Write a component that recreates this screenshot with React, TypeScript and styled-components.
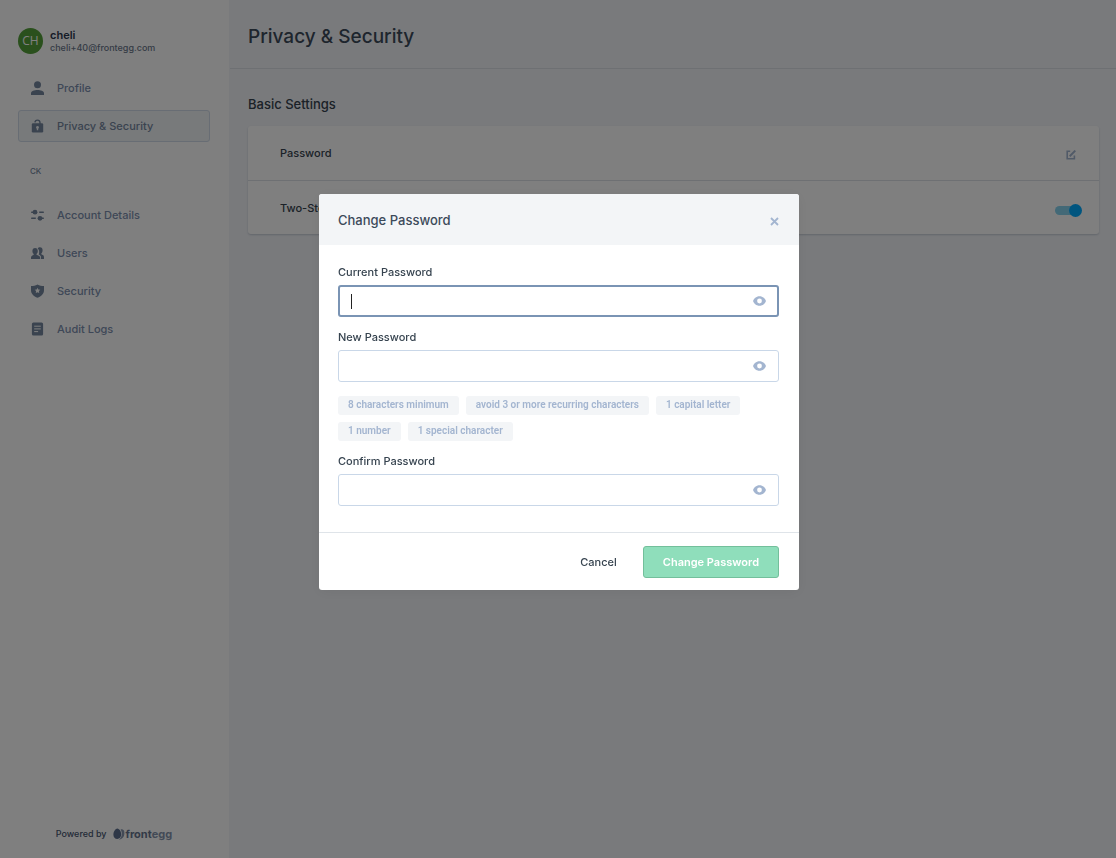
import React, { useState } from "react";
import styled, { createGlobalStyle } from "styled-components";

const GlobalStyle = createGlobalStyle`
  *, *::before, *::after { box-sizing: border-box; }
  body {
    margin: 0;
    background: #f3f5f9;
    color: #36434f;
    font-family: Inter, "Liberation Sans", sans-serif;
    font-size: 11px;
    font-weight: 500;
    line-height: 16px;
  }
  button, input { font: inherit; color: inherit; }
  button { border: 0; padding: 0; background: none; cursor: pointer; }
  h1, h2, h3, p, ul { margin: 0; padding: 0; font-weight: 500; }
  ul { list-style: none; }
`;

/* Portal shell */

const Shell = styled.div`
  display: flex;
  min-height: 100vh;
`;

const Sidebar = styled.aside`
  display: flex;
  flex-direction: column;
  flex: none;
  width: 230px;
  padding: 28px 19px 16px 18px;
  background: #fff;
  border-right: 1px solid #f3f5f9;
`;

const UserCard = styled.div`
  display: flex;
  align-items: center;
  gap: 7px;
  margin-bottom: 18px;
`;

const Avatar = styled.div`
  display: grid;
  place-items: center;
  width: 25px;
  height: 26px;
  border-radius: 50%;
  background: #54a03a;
  color: #fff;
  font-family: "Open Sans", sans-serif;
  font-weight: 400;
  font-size: 12px;
`;

const UserName = styled.p`
  font-weight: 600;
  line-height: 13px;
  color: #2d3850;
`;

const UserEmail = styled.p`
  font-size: 9px;
  font-weight: 500;
  line-height: 12px;
  color: #6b788c;
`;

const NavList = styled.ul`
  display: flex;
  flex-direction: column;
  gap: 6px;
`;

const NavLink = styled.a<{ $active?: boolean }>`
  display: flex;
  align-items: center;
  gap: 13px;
  height: 32px;
  padding: 0 12px;
  border: 1px solid ${(p) => (p.$active ? "#d0dbe8" : "transparent")};
  border-radius: 3px;
  background: ${(p) => (p.$active ? "#f1f4f7" : "transparent")};
  color: ${(p) => (p.$active ? "#75879f" : "#7c8fae")};
  text-decoration: none;

  svg { color: #75879f; }
`;

const NavHeading = styled.h2`
  padding: 21px 12px 20px;
  font-size: 8px;
  color: #75879f;
`;

const PoweredBy = styled.footer`
  display: flex;
  justify-content: center;
  align-items: center;
  gap: 6px;
  margin-top: auto;
  font-size: 9px;
  color: #47566f;
`;

const Brand = styled.span`
  display: flex;
  align-items: center;
  font-size: 11px;
  font-weight: 700;
  color: #66758f;

  svg { margin-right: 1px; }
`;

const BrandTail = styled.span`
  color: #8695ad;
`;

const Main = styled.main`
  flex: 1;
  min-width: 0;
`;

const PageHeader = styled.header`
  display: flex;
  align-items: center;
  height: 69px;
  padding: 6px 18px 0;
  border-bottom: 1px solid #dde1e7;
`;

const PageTitle = styled.h1`
  font-size: 19px;
  line-height: 24px;
  color: #3c4a5a;
`;

const Section = styled.section`
  padding: 26px 17px 26px 18px;
`;

const SectionTitle = styled.h2`
  margin-bottom: 13px;
  font-size: 13px;
  line-height: 18px;
`;

const SettingsCard = styled.div`
  border-radius: 3px;
  background: #fff;
  box-shadow: 0 1px 2px rgba(60, 80, 110, 0.25);
`;

const SettingRow = styled.div`
  display: flex;
  align-items: center;
  justify-content: space-between;
  height: 54px;
  padding: 0 18px 0 32px;

  & + & {
    border-top: 1px solid #dde1e7;
  }
`;

const EditButton = styled.button`
  display: flex;
  margin-right: 5px;
  padding: 3px 0 0;
  color: #a3b5d0;
`;

const Toggle = styled.input`
  appearance: none;
  display: flex;
  align-items: center;
  width: 26px;
  height: 9px;
  margin: 6px 0 0;
  border-radius: 5px;
  background: #86d2ee;
  cursor: pointer;

  &::before {
    content: "";
    width: 13px;
    height: 13px;
    flex: none;
    border-radius: 50%;
    background: #aab6c8;
  }
  &:checked::before {
    margin-left: 14px;
    background: #00aaff;
  }
`;

/* Dialog */

const Overlay = styled.div`
  position: fixed;
  inset: 0;
  display: flex;
  align-items: center;
  justify-content: center;
  padding: 0 0 74px 2px;
  background: rgba(0, 0, 0, 0.5);
`;

const Dialog = styled.form`
  width: 480px;
  max-width: 100%;
  border-radius: 3px;
  overflow: hidden;
  background: #fff;
  box-shadow: 0 2px 14px rgba(0, 0, 0, 0.06);
`;

const DialogHeader = styled.header`
  display: flex;
  align-items: center;
  justify-content: space-between;
  height: 51px;
  padding: 0 20px 0 19px;
  background: #f3f5f7;
`;

const DialogTitle = styled.h2`
  font-size: 13px;
  line-height: 18px;
  color: #3c4a5a;
`;

const CloseButton = styled.button`
  display: flex;
  padding-top: 4px;
  color: #a3b5d0;
`;

const DialogBody = styled.div`
  display: flex;
  flex-direction: column;
  gap: 12px;
  padding: 19px 20px 26px 19px;
`;

const FieldLabel = styled.label`
  display: block;
  margin-bottom: 5px;
`;

const FieldBox = styled.div<{ $focused?: boolean }>`
  position: relative;
  display: flex;
  align-items: center;
  height: 32px;
  padding: 0 ${(p) => (p.$focused ? 11 : 12)}px;
  border: ${(p) => (p.$focused ? "2px solid #7a94b4" : "1px solid #c9d7e8")};
  border-radius: 3px;
`;

const Caret = styled.span`
  position: absolute;
  left: 11px;
  top: 7px;
  width: 1px;
  height: 15px;
  background: #222;
`;

const FieldInput = styled.input`
  flex: 1;
  min-width: 0;
  height: 28px;
  padding: 0;
  border: 0;
  outline: 0;
  background: none;
`;

const RevealButton = styled.button`
  display: flex;
  color: #a3b5d0;
`;

const RuleList = styled.ul`
  display: flex;
  flex-wrap: wrap;
  gap: 7px;
  padding-top: 2px;
`;

const Rule = styled.li`
  height: 19px;
  padding: 0 10px;
  border-radius: 3px;
  background: #f3f5f7;
  color: #a3b5d0;
  font-family: Roboto, sans-serif;
  font-size: 10px;
  font-weight: 600;
  line-height: 18px;
`;

const DialogFooter = styled.footer`
  display: flex;
  justify-content: flex-end;
  align-items: center;
  gap: 6px;
  height: 58px;
  padding: 0 20px;
  border-top: 1px solid #dfe4e9;
`;

const Button = styled.button<{ $primary?: boolean }>`
  height: 32px;
  padding: 0 19px;
  border: 1px solid ${(p) => (p.$primary ? "#73bf9b" : "transparent")};
  border-radius: 3px;
  background: ${(p) => (p.$primary ? "#8fdebb" : "transparent")};
  color: ${(p) => (p.$primary ? "#fff" : "#36434f")};
  font-weight: ${(p) => (p.$primary ? 600 : 500)};
`;

/* Icons */

const NavSvg = ({ children }: { children: React.ReactNode }) => (
  <svg width="13" height="14" viewBox="0 0 13 14" fill="currentColor" aria-hidden="true">
    {children}
  </svg>
);

const ProfileIcon = () => (
  <NavSvg>
    <circle cx="6.5" cy="3.7" r="3.5" />
    <path d="M0 14v-1.9C0 10 3.3 8.9 6.5 8.9S13 10 13 12.1V14z" />
  </NavSvg>
);

const LockIcon = () => (
  <NavSvg>
    <path d="M3.900 3.400C4.200 .4 8.800 .2 9 3.600V5" fill="none" stroke="currentColor" strokeWidth="1.4" />
    <rect x="0.8" y="4.300" width="11.400" height="9.200" rx="1.2" />
    <path d="M6.5 6.900a1.500 1.500 0 0 1 .7 2.800v1.500H5.800V9.700a1.500 1.500 0 0 1 .7-2.800z" fill="#f1f4f7" />
  </NavSvg>
);

const SlidersIcon = () => (
  <NavSvg>
    <path d="M.7 4.200H12.300M.7 10.300H12.300" stroke="currentColor" strokeWidth="1.4" strokeLinecap="round" />
    <rect x="6" y="3" width="2.2" height="2.4" fill="#fff" />
    <rect x="4.8" y="9" width="2.2" height="2.6" fill="#fff" />
    <circle cx="4" cy="4.2" r="2.4" />
    <circle cx="9" cy="10.3" r="2.4" />
  </NavSvg>
);

const UsersIcon = () => (
  <NavSvg>
    <path d="M6.7 2.600C7 1.500 8 1.200 9 1.200c1.700 0 2.600 1.200 2.600 3 0 1.600-.6 2.600-1.300 3.300v.7c.9.500 2.700.9 2.700 2.700V13H10v-1.700c0-1.500-1.300-2.200-2.300-2.700C8.300 7 8.600 4 6.700 2.600z" />
    <path d="M4.100 2c1.700 0 2.700 1.200 2.700 2.900 0 1.500-.6 2.500-1.300 3.100v.7c1.300.6 3.700 1.200 3.700 2.900V13H0v-1.400c0-1.700 1.700-2.200 2.700-2.800V8C2 7.400 1.400 6.400 1.400 4.900 1.400 3.200 2.400 2 4.100 2z" />
  </NavSvg>
);

const ShieldIcon = () => (
  <NavSvg>
    <path d="M6.500.4C8.500 1.500 10.700 2 13 2v4.200c0 3.700-2.700 6-6.500 7.500C2.700 12.200 0 9.900 0 6.200V2c2.300 0 4.500-.5 6.500-1.600z" />
    <path d="M6.500 3.700l.8 1.700 2 .3-1.400 1.400.3 2-1.700-.9-1.700.9.300-2-1.400-1.400 2-.3z" fill="#fff" />
  </NavSvg>
);

const LogIcon = () => (
  <NavSvg>
    <rect x="0.9" y="0.6" width="11.2" height="12.8" rx="1.500" />
    <path d="M3.200 4.200h6.600M3.200 6.900h6.600M3.200 9.600h3.900" stroke="#fff" strokeWidth="1" />
  </NavSvg>
);

const EditIcon = () => (
  <svg width="10" height="10" viewBox="0 0 10 10" fill="none" stroke="currentColor" strokeWidth="1.6" aria-hidden="true">
    <path d="M4.200 1.200H1.200V8.800H8.400V5.600" />
    <path d="M3.700 6.300L9.300.6" strokeWidth="2" />
  </svg>
);

const CloseIcon = () => (
  <svg width="9" height="9" viewBox="0 0 9 9" fill="none" stroke="currentColor" strokeWidth="1.800" aria-hidden="true">
    <path d="M1 1l7 7M8 1L1 8" />
  </svg>
);

const EyeIcon = () => (
  <svg width="13" height="10" viewBox="0 0 13 10" aria-hidden="true">
    <path d="M6.500.2C10 .2 12.200 2.700 13 5c-.8 2.300-3 4.800-6.500 4.800S.8 7.300 0 5C.8 2.700 3 .2 6.500.2z" fill="currentColor" />
    <circle cx="6.5" cy="5" r="2.4" fill="#fff" />
  </svg>
);

const EggLogo = () => (
  <svg width="12" height="12" viewBox="0 0 12 12" aria-hidden="true">
    <path d="M7.600 1.500c2.300-.6 4 .8 3.800 4-.2 3.500-2.400 6-5.500 6C9 9.800 9.700 5 7.600 1.500z" fill="#8695ad" />
    <path d="M4.300.6C6.600.8 8.300 4 8.200 6.600 8.100 9.300 6.600 11 4.300 11 2 11 .4 9.400.4 6.800.4 4 2.200.8 4.300.6z" fill="#5d6f8f" />
  </svg>
);

/* Content */

type LinkItem = { label: string; icon: React.ReactNode; active?: boolean };

const personalLinks: LinkItem[] = [
  { label: "Profile", icon: <ProfileIcon /> },
  { label: "Privacy & Security", icon: <LockIcon />, active: true },
];

const accountLinks: LinkItem[] = [
  { label: "Account Details", icon: <SlidersIcon /> },
  { label: "Users", icon: <UsersIcon /> },
  { label: "Security", icon: <ShieldIcon /> },
  { label: "Audit Logs", icon: <LogIcon /> },
];

const passwordRules = [
  "8 characters minimum",
  "avoid 3 or more recurring characters",
  "1 capital letter",
  "1 number",
  "1 special character",
];

const Nav = ({ links }: { links: LinkItem[] }) => (
  <NavList>
    {links.map((link) => (
      <li key={link.label}>
        <NavLink href="#" $active={link.active} aria-current={link.active ? "page" : undefined}>
          {link.icon}
          {link.label}
        </NavLink>
      </li>
    ))}
  </NavList>
);

const PasswordField = ({ id, label, focused }: { id: string; label: string; focused?: boolean }) => {
  const [value, setValue] = useState("");
  const [visible, setVisible] = useState(false);
  return (
    <div>
      <FieldLabel htmlFor={id}>{label}</FieldLabel>
      <FieldBox $focused={focused}>
        {focused && value === "" && <Caret />}
        <FieldInput
          id={id}
          type={visible ? "text" : "password"}
          value={value}
          onChange={(e) => setValue(e.target.value)}
        />
        <RevealButton type="button" aria-label={`Show ${label}`} onClick={() => setVisible(!visible)}>
          <EyeIcon />
        </RevealButton>
      </FieldBox>
    </div>
  );
};

export default function App() {
  return (
    <>
      <GlobalStyle />
      <Shell>
        <Sidebar>
          <UserCard>
            <Avatar>CH</Avatar>
            <div>
              <UserName>cheli</UserName>
              <UserEmail>cheli+40@frontegg.com</UserEmail>
            </div>
          </UserCard>
          <Nav links={personalLinks} />
          <NavHeading>CK</NavHeading>
          <Nav links={accountLinks} />
          <PoweredBy>
            Powered by
            <Brand>
              <EggLogo />
              front<BrandTail>egg</BrandTail>
            </Brand>
          </PoweredBy>
        </Sidebar>
        <Main>
          <PageHeader>
            <PageTitle>Privacy &amp; Security</PageTitle>
          </PageHeader>
          <Section>
            <SectionTitle>Basic Settings</SectionTitle>
            <SettingsCard>
              <SettingRow>
                <span>Password</span>
                <EditButton type="button" aria-label="Edit password">
                  <EditIcon />
                </EditButton>
              </SettingRow>
              <SettingRow>
                <label htmlFor="two-step">Two-Step Verification</label>
                <Toggle id="two-step" type="checkbox" role="switch" defaultChecked />
              </SettingRow>
            </SettingsCard>
          </Section>
        </Main>
      </Shell>
      <Overlay>
        <Dialog role="dialog" aria-modal="true" aria-labelledby="dialog-title" onSubmit={(e) => e.preventDefault()}>
          <DialogHeader>
            <DialogTitle id="dialog-title">Change Password</DialogTitle>
            <CloseButton type="button" aria-label="Close">
              <CloseIcon />
            </CloseButton>
          </DialogHeader>
          <DialogBody>
            <PasswordField id="current-password" label="Current Password" focused />
            <PasswordField id="new-password" label="New Password" />
            <RuleList>
              {passwordRules.map((rule) => (
                <Rule key={rule}>{rule}</Rule>
              ))}
            </RuleList>
            <PasswordField id="confirm-password" label="Confirm Password" />
          </DialogBody>
          <DialogFooter>
            <Button type="button">Cancel</Button>
            <Button type="submit" $primary>
              Change Password
            </Button>
          </DialogFooter>
        </Dialog>
      </Overlay>
    </>
  );
}
